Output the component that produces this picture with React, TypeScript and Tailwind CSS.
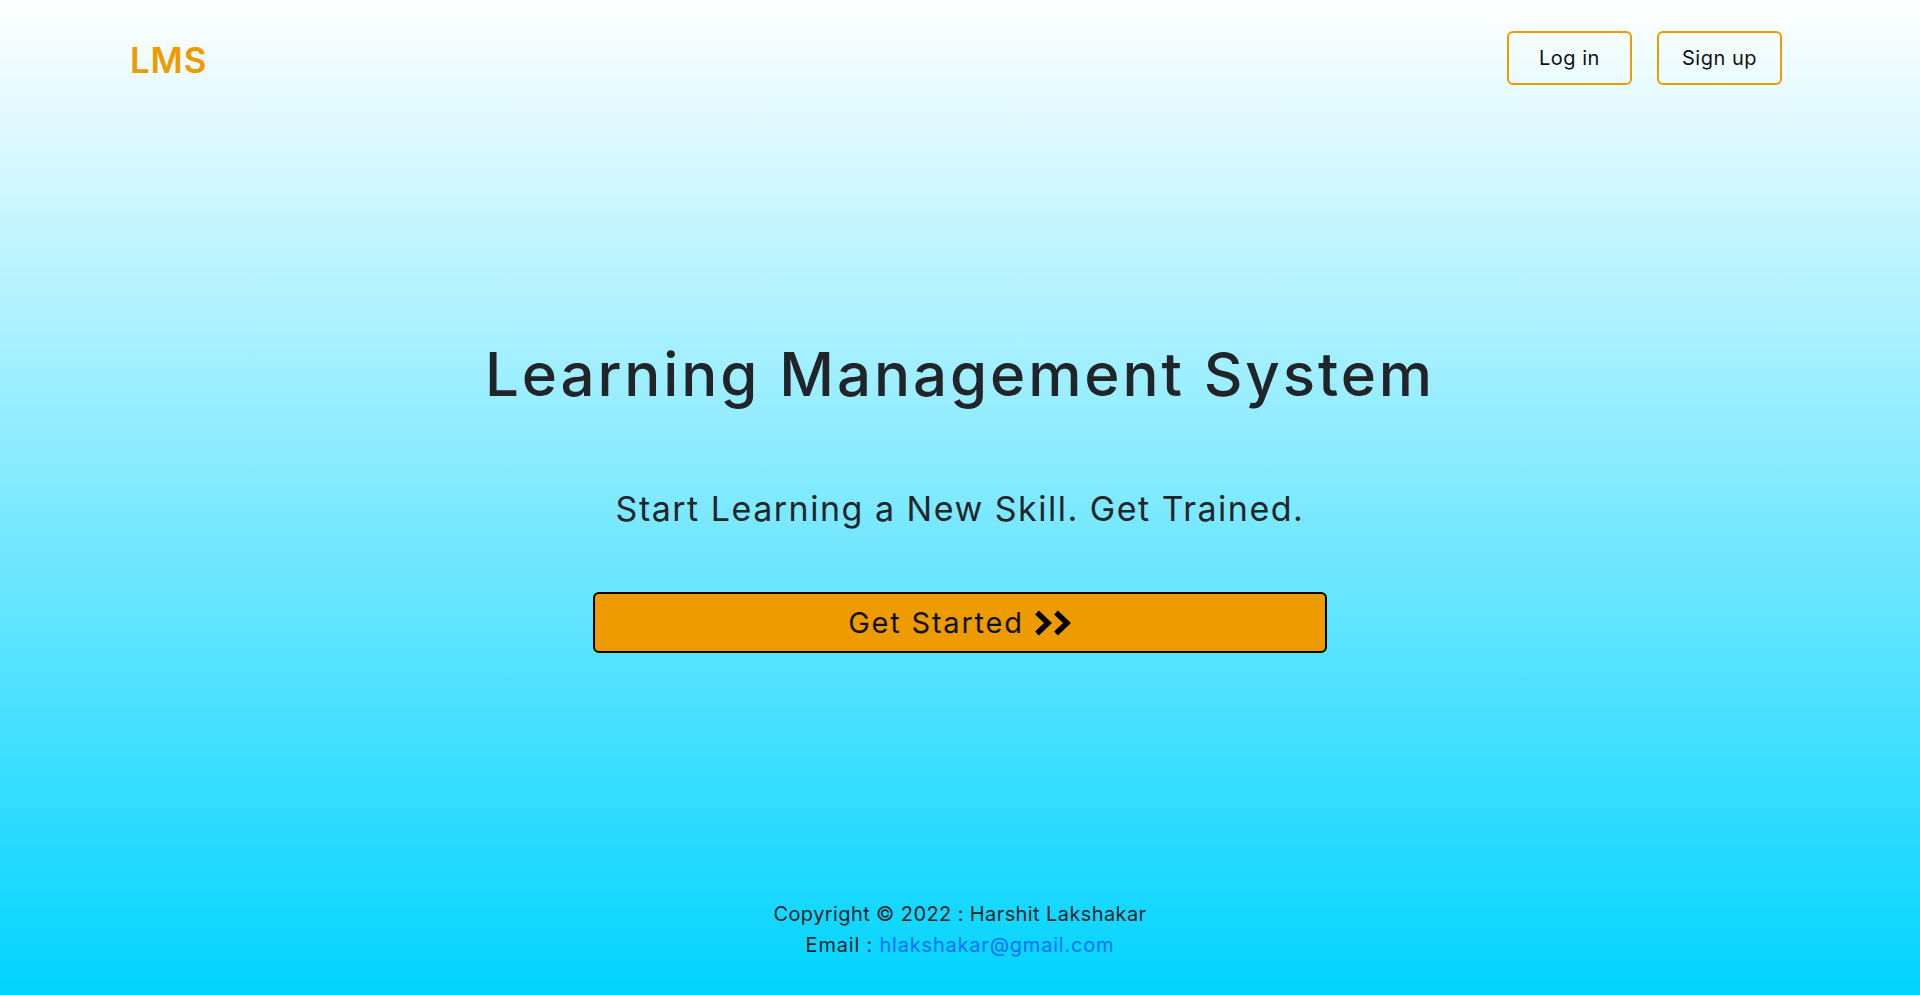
import React from "react";

function Chevrons() {
  return (
    <svg width="38" height="26" viewBox="0 0 38 26" fill="none" aria-hidden="true">
      <polyline points="3,2.5 14,13 3,23.5" stroke="#000" strokeWidth="5.5" strokeLinejoin="miter" strokeLinecap="butt" />
      <polyline points="22,2.5 33,13 22,23.5" stroke="#000" strokeWidth="5.5" strokeLinejoin="miter" strokeLinecap="butt" />
    </svg>
  );
}

export default function App() {
  return (
    <div
      className="min-h-screen w-full flex flex-col bg-[linear-gradient(to_bottom,#ffffff,#00d4ff)] text-[#212529]"
      style={{ fontFamily: "Inter, 'Noto Sans', sans-serif" }}
    >
      <header className="flex items-center justify-between pt-[31px] pl-[130px] pr-[138px]">
        <div className="mt-[4px] text-[35px] font-semibold text-[#ee9b00] leading-none tracking-[0.8px]">LMS</div>
        <div className="flex items-center gap-[25px]">
          <button className="h-[54px] w-[125px] rounded-md border-2 border-[#ee9b00] text-[20px] tracking-[0.5px] text-[#111] bg-transparent">
            Log in
          </button>
          <button className="h-[54px] w-[125px] rounded-md border-2 border-[#ee9b00] text-[20px] tracking-[0.5px] text-[#111] bg-transparent">
            Sign up
          </button>
        </div>
      </header>

      <main className="flex flex-col items-center">
        <h1 className="mt-[259px] text-[60px] font-medium leading-none tracking-[2.9px]">
          Learning Management System
        </h1>
        <p className="mt-[88px] text-[34px] leading-none tracking-[1.5px]">
          Start Learning a New Skill. Get Trained.
        </p>
        <button className="mt-[66px] h-[61px] w-[734px] rounded-md border-2 border-black bg-[#ee9b00] flex items-center justify-center gap-[10px] text-[29px] tracking-[1.8px] text-[#111]">
          <span>Get Started</span>
          <Chevrons />
        </button>
      </main>

      <footer className="mt-[246px] flex flex-col items-center text-[20px] leading-[31px] tracking-[0.4px]">
        <div>Copyright © 2022 : Harshit Lakshakar</div>
        <div className="tracking-[0.8px]">
          Email : <a href="#" className="text-[#0d6efd]">hlakshakar@gmail.com</a>
        </div>
      </footer>
    </div>
  );
}
